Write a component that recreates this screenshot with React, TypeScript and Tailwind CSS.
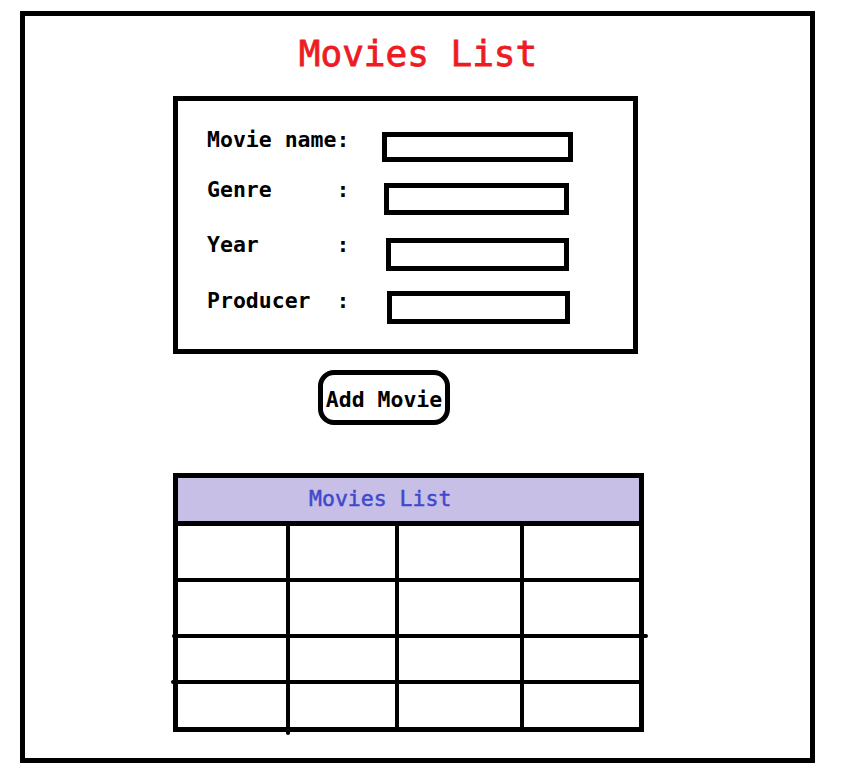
import React from "react";

const mono = "font-['DejaVu_Sans_Mono','Liberation_Mono',monospace]";

function Field({ label, inputW, ml, labelMt }: { label: string; inputW: string; ml: string; labelMt: string }) {
  return (
    <div className="flex items-start">
      <span className={`w-[175px] shrink-0 whitespace-pre font-bold text-[21.5px] leading-none text-black ${labelMt}`}>{label}</span>
      <div className={`${inputW} ${ml} border-[5px] border-black bg-white`} />
    </div>
  );
}

export default function App() {
  return (
    <div className={`w-[842px] h-[771px] bg-white pt-[11px] pl-[20px] ${mono}`}>
      <div className="w-[795px] h-[752px] border-[5px] border-black pt-[20px]">
        <h1 className="text-center text-[36px] leading-none text-[#ED1C24] pl-[1px] [-webkit-text-stroke:0.8px_#ED1C24]">Movies List</h1>

        <div className="mt-[24px] ml-[148px] w-[465px] h-[258px] border-[5px] border-black pt-[31px] pl-[29px] flex flex-col">
          <div className="h-[30px]">
            <Field label="Movie name:" inputW="w-[191px] h-[30px]" ml="ml-0" labelMt="-mt-[3px]" />
          </div>
          <div className="mt-[21px] h-[32px]">
            <Field label="Genre     :" inputW="w-[185px] h-[32px]" ml="ml-[2px]" labelMt="-mt-[4px]" />
          </div>
          <div className="mt-[23px] h-[33px]">
            <Field label="Year      :" inputW="w-[183px] h-[33px]" ml="ml-[4px]" labelMt="-mt-[4px]" />
          </div>
          <div className="mt-[20px] h-[33px]">
            <Field label="Producer  :" inputW="w-[183px] h-[33px]" ml="ml-[5px]" labelMt="-mt-[1px]" />
          </div>
        </div>

        <button className="mt-[16px] ml-[293px] w-[132px] h-[55px] border-[5px] border-black rounded-[16px] bg-white flex items-center justify-center pt-[4px] font-bold text-[21.5px] leading-none text-black">
          Add Movie
        </button>

        <div className="relative mt-[48px] ml-[148px] w-[471px] border-[5px] border-black">
          <div className="h-[48px] bg-[#C8BFE7] border-b-[5px] border-black pl-[131px] pt-[10px] text-[21.5px] leading-none text-[#3F48CC] [-webkit-text-stroke:0.5px_#3F48CC]">
            Movies List
          </div>
          <div className="grid grid-cols-[108px_105px_121px_115px] grid-rows-[52px_52px_42px_43px] gap-[4px] bg-black">
            {Array.from({ length: 16 }).map((_, i) => (
              <div key={i} className="bg-white" />
            ))}
          </div>
          <span className="absolute left-[108px] top-[249px] w-[4px] h-[8px] rounded-full bg-black" />
          <span className="absolute left-[461px] top-[156px] w-[9px] h-[4px] rounded-full bg-black" />
          <span className="absolute left-[-6px] top-[156px] w-[6px] h-[4px] rounded-full bg-black" />
          <span className="absolute left-[-7px] top-[202px] w-[7px] h-[4px] rounded-full bg-black" />
        </div>
      </div>
    </div>
  );
}
